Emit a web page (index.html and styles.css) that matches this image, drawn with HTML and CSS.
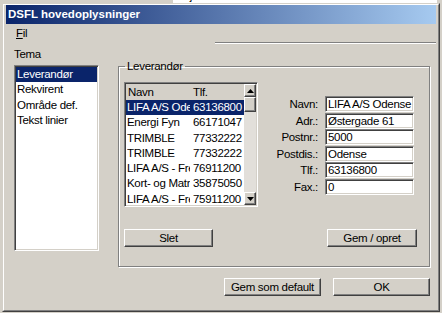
FILE: index.html
```html
<!DOCTYPE html>
<html lang="da">
<head>
  <meta charset="UTF-8" />
  <title>DSFL hovedoplysninger</title>
  <link rel="stylesheet" href="styles.css">
</head>
<body>
  <div class="behind">
    <div class="behind-left"></div>
    <div class="behind-list">
      <span class="b1">Vej</span>
      <span class="b2">Nummer</span>
      <span class="b3">Tele</span>
      <span class="b4">Bro</span>
      <span class="b5">Mærkat</span>
      <span class="b6">Resultat</span>
      <span class="b7">Msl</span>
    </div>
  </div>

  <div class="dialog">
    <div class="frame">
      <div class="titlebar">DSFL hovedoplysninger</div>
      <div class="menubar"><span class="menu-item"><u>F</u>il</span></div>
      <div class="bevel"></div>

      <div class="content">
        <div class="tema">
          <div class="tema-label">Tema</div>
          <ul class="listbox sunken">
            <li class="selected">Leverandør</li>
            <li>Rekvirent</li>
            <li>Område def.</li>
            <li>Tekst linier</li>
          </ul>
        </div>

        <div class="main">
          <fieldset class="group">
            <legend>Leverandør</legend>
            <div class="group-top">
              <div class="listview sunken">
                <div class="lv-body">
                  <div class="lv-header"><span class="c1">Navn</span><span class="c2">Tlf.</span></div>
                  <div class="lv-row selected"><span class="c1"><span class="cell">LIFA A/S Odense</span></span><span class="c2">63136800</span></div>
                  <div class="lv-row"><span class="c1"><span class="cell">Energi Fyn</span></span><span class="c2">66171047</span></div>
                  <div class="lv-row"><span class="c1"><span class="cell">TRIMBLE</span></span><span class="c2">77332222</span></div>
                  <div class="lv-row"><span class="c1"><span class="cell">TRIMBLE</span></span><span class="c2">77332222</span></div>
                  <div class="lv-row"><span class="c1"><span class="cell">LIFA A/S - Fredericia</span></span><span class="c2">76911200</span></div>
                  <div class="lv-row"><span class="c1"><span class="cell">Kort- og Matrikelstyrelsen</span></span><span class="c2">35875050</span></div>
                  <div class="lv-row"><span class="c1"><span class="cell">LIFA A/S - Frederikshavn</span></span><span class="c2">75911200</span></div>
                </div>
                <div class="scrollbar">
                  <div class="sb-btn raised">
                    <svg width="7" height="4" viewBox="0 0 7 4"><path d="M3.5 0 L7 4 L0 4 Z" fill="#000"/></svg>
                  </div>
                  <div class="sb-thumb raised"></div>
                  <div class="sb-track"></div>
                  <div class="sb-btn raised">
                    <svg width="7" height="4" viewBox="0 0 7 4"><path d="M0 0 L7 0 L3.5 4 Z" fill="#000"/></svg>
                  </div>
                </div>
              </div>

              <div class="fields">
                <label>Navn:</label><div class="field sunken">LIFA A/S Odense</div>
                <label>Adr.:</label><div class="field sunken">Østergade 61</div>
                <label>Postnr.:</label><div class="field sunken">5000</div>
                <label>Postdis.:</label><div class="field sunken">Odense</div>
                <label>Tlf.:</label><div class="field sunken">63136800</div>
                <label>Fax.:</label><div class="field sunken">0</div>
              </div>
            </div>

            <div class="group-buttons">
              <button class="btn raised slet">Slet</button>
              <button class="btn raised gem">Gem / opret</button>
            </div>
          </fieldset>

          <div class="dialog-buttons">
            <button class="btn raised wide">Gem som default</button>
            <button class="btn raised wide">OK</button>
          </div>
        </div>
      </div>
    </div>
  </div>
</body>
</html>
```

FILE: styles.css
```css
body {
  margin: 0;
  width: 442px;
  height: 313px;
  overflow: hidden;
  background-color: #d4d0c8;
  font-family: "Liberation Sans", Arial, sans-serif;
  font-size: 11.5px;
  letter-spacing: -0.3px;
  color: #000;
}

/* window behind the dialog, only its bottom edge shows */
.behind {
  display: flex;
  height: 3px;
  overflow: hidden;
}

.behind-left {
  width: 173px;
}

.behind-list {
  width: 264px;
  background: #fff;
  display: flex;
  line-height: 13px;
  margin-top: -10px;
  height: 13px;
  white-space: nowrap;
}

.behind-list span {
  margin-left: 14px;
}

.behind-list .b1 { margin-left: 4px; }

/* dialog frame */
.dialog {
  margin-left: 2px;
  width: 438px;
  height: 309px;
  box-sizing: border-box;
  border: 1px solid;
  border-color: #d4d0c8 #404040 #404040 #d4d0c8;
}

.frame {
  height: 100%;
  box-sizing: border-box;
  border: 1px solid;
  border-color: #fff #808080 #808080 #fff;
  padding: 0 2px 2px 2px;
}

.titlebar {
  height: 19px;
  line-height: 19px;
  padding-left: 2px;
  background: linear-gradient(to right, #0a246a, #a6caf0);
  color: #fff;
  font-weight: bold;
  letter-spacing: 0;
}

.menubar {
  height: 18px;
  line-height: 18px;
  padding-left: 10px;
}

.bevel {
  margin-left: 209px;
  border-top: 1px solid #808080;
  border-bottom: 1px solid #fff;
}

.content {
  display: flex;
  padding: 3px 0 0 8px;
}

/* shared 3d borders */
.sunken {
  box-sizing: border-box;
  border: 1px solid;
  border-color: #808080 #fff #fff #808080;
  padding: 1px;
  box-shadow: inset 1px 1px 0 #404040, inset -1px -1px 0 #d4d0c8;
  background: #fff;
}

.raised {
  box-sizing: border-box;
  background: #d4d0c8;
  border: 1px solid;
  border-color: #fff #404040 #404040 #fff;
  box-shadow: inset -1px -1px 0 #808080;
}

/* tema list */
.tema {
  width: 85px;
}

.tema-label {
  height: 15px;
  line-height: 15px;
  margin-bottom: 3px;
}

.listbox {
  width: 85px;
  height: 186px;
  margin: 0;
  list-style: none;
}

.listbox li {
  height: 15.25px;
  line-height: 15.25px;
  padding-left: 1px;
  white-space: nowrap;
}

.listbox li.selected,
.lv-row.selected {
  background: #0a246a;
  color: #fff;
}

/* leverandør group */
.main {
  margin-left: 19px;
  width: 312px;
}

.group {
  width: 312px;
  box-sizing: border-box;
  margin: 12px 0 0 0;
  padding: 9px 15px 19px 5px;
  border: 1px solid #808080;
  box-shadow: inset 1px 1px 0 #fff, 1px 1px 0 #fff;
  min-inline-size: 0;
}

.group legend {
  padding: 0 2px;
  margin-left: 1px;
  line-height: 14px;
}

.group-top {
  display: flex;
}

.listview {
  width: 134px;
  height: 125px;
  display: flex;
}

.lv-body {
  flex: 1;
  overflow: hidden;
}

.lv-header {
  display: flex;
  height: 16px;
  line-height: 16px;
  background: #d4d0c8;
}

.lv-header .c1 {
  padding-left: 2px;
}

.lv-row {
  display: flex;
  height: 15.25px;
  line-height: 15.25px;
}

.c1 {
  width: 66px;
  flex: none;
  box-sizing: border-box;
  padding-left: 1px;
  white-space: nowrap;
}

.cell {
  display: block;
  width: 63px;
  overflow: hidden;
}

.c2 {
  padding-left: 1px;
  white-space: nowrap;
}

.scrollbar {
  width: 12px;
  display: flex;
  flex-direction: column;
}

.sb-btn {
  height: 13px;
  display: flex;
  align-items: center;
  justify-content: center;
}

.sb-thumb {
  height: 15px;
}

.sb-track {
  flex: 1;
  background: #e2dfda;
}

.fields {
  margin-top: 14px;
  display: grid;
  grid-template-columns: 60px 89px;
  grid-auto-rows: 16px;
  column-gap: 7px;
  row-gap: 0.5px;
}

.fields label {
  text-align: right;
  line-height: 16px;
  white-space: nowrap;
}

.field {
  height: 16px;
  line-height: 12px;
  padding-left: 2px;
  overflow: hidden;
  white-space: nowrap;
}

.group-buttons {
  display: flex;
  justify-content: space-between;
  margin: 22px -3px 0 0;
}

.btn {
  height: 18px;
  padding: 0;
  font-family: inherit;
  font-size: 11.5px;
  letter-spacing: -0.3px;
  line-height: 14px;
  white-space: nowrap;
  color: #000;
}

.slet {
  width: 89px;
}

.gem {
  width: 90px;
}

.dialog-buttons {
  display: flex;
  justify-content: flex-end;
  gap: 12px;
  margin-top: 11px;
}

.wide {
  width: 97px;
}
```
